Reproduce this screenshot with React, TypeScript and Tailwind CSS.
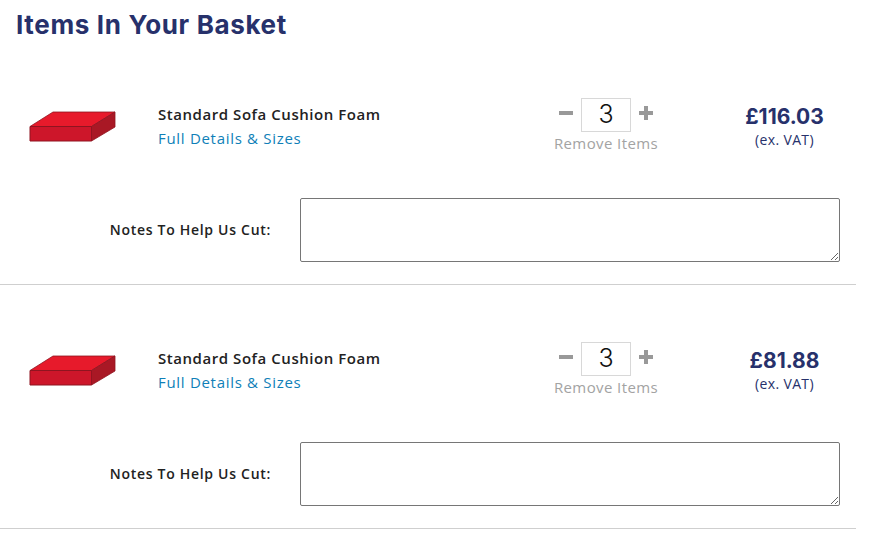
const items = [
  { id: 1, price: '£116.03' },
  { id: 2, price: '£81.88' },
];

function FoamIcon() {
  return (
    <svg width="88" height="32" viewBox="0 0 88 32" className="shrink-0">
      <path d="M2 16.5 L25 2 L87 2 L63.5 16.5 Z" fill="#e71a2b" stroke="#8f1420" strokeWidth="0.8" />
      <path d="M2 16.5 L63.5 16.5 L63.5 31 L2 31 Z" fill="#cd162a" stroke="#8f1420" strokeWidth="1" />
      <path d="M63.5 16.5 L87 2 L87 17 L63.5 31 Z" fill="#a91825" stroke="#8f1420" strokeWidth="0.8" />
    </svg>
  );
}

function BasketItem({ price }: { price: string }) {
  return (
    <div className="h-[244px] border-b border-[#cfcfcf] w-[856px]">
      <div className="flex items-start pt-[57px] h-[157px]">
        <div className="pl-[28px] pt-[12px] w-[158px] shrink-0">
          <FoamIcon />
        </div>
        <div className="w-[375px] shrink-0 pt-[6px]">
          <p className="text-[15px] leading-[20px] font-semibold text-[#222] tracking-[0.55px]">Standard Sofa Cushion Foam</p>
          <a className="block mt-[4px] text-[15px] leading-[20px] text-[#0f7fb8] tracking-[0.7px]">Full Details &amp; Sizes</a>
        </div>
        <div className="w-[146px] shrink-0 flex flex-col items-center">
          <div className="flex items-center gap-[8px] h-[34px]">
            <svg width="14" height="14" viewBox="0 0 14 14" className="mb-[4px]">
              <rect x="0" y="5" width="14" height="4" fill="#999" />
            </svg>
            <div className="w-[50px] h-[34px] border border-[#d8d8d8] flex items-center justify-center text-[25px] font-light text-[#111] font-['Inter',sans-serif]">3</div>
            <svg width="14" height="14" viewBox="0 0 14 14" className="mb-[4px]">
              <path d="M0 5h5V0h4v5h5v4H9v5H5V9H0z" fill="#999" />
            </svg>
          </div>
          <span className="mt-[1px] text-[15px] leading-[20px] text-[#a3a3a3] tracking-[0.4px]">Remove Items</span>
        </div>
        <div className="w-[177px] pl-[34px] flex flex-col items-center pt-[7px]">
          <span className="text-[21px] leading-[24px] font-bold text-[#27316b] font-['Inter',sans-serif]">{price}</span>
          <span className="mt-[2px] text-[14px] leading-[18px] text-[#27316b] tracking-[0.35px]">(ex. VAT)</span>
        </div>
      </div>
      <div className="flex items-center">
        <label className="w-[271px] -mt-[2px] text-right text-[14px] font-semibold text-[#222] tracking-[0.7px]">Notes To Help Us Cut:</label>
        <textarea className="ml-[29px] w-[540px] h-[64px] border border-[#767676] rounded-[2px] bg-white" />
      </div>
    </div>
  );
}

export default function App() {
  return (
    <div className="min-h-[542px] bg-white font-['Open_Sans',sans-serif] overflow-hidden">
      <h2 className="pl-4 pt-[9px] h-[41px] text-[26px] leading-[32px] font-bold text-[#27316b] font-['Inter',sans-serif] tracking-[0.65px] whitespace-nowrap">Items In Your Basket</h2>
      {items.map((item) => (
        <BasketItem key={item.id} price={item.price} />
      ))}
    </div>
  );
}
